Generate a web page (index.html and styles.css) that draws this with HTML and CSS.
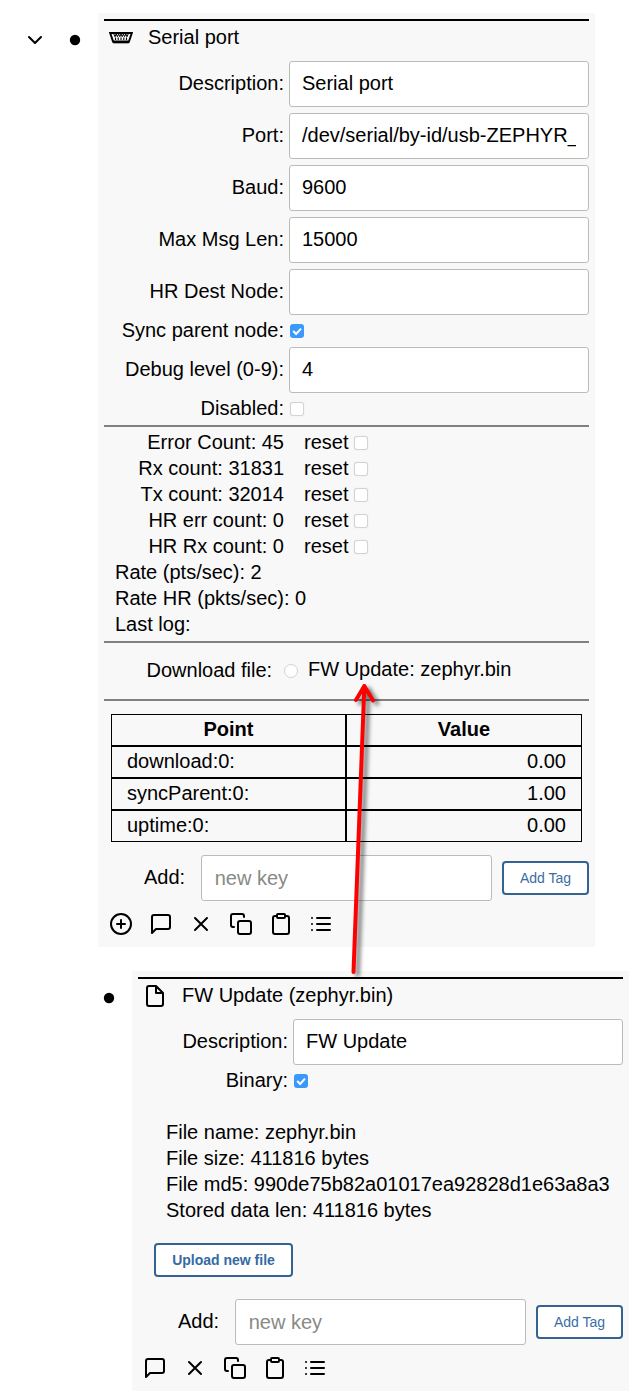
FILE: index.html
```html
<!DOCTYPE html>
<html lang="en">
<head>
<meta charset="utf-8">
<title>Nodes</title>
<link rel="stylesheet" href="styles.css">
</head>
<body>
<svg class="defs" width="0" height="0">
  <symbol id="message" viewBox="0 0 24 24"><path d="M21 15a2 2 0 0 1-2 2H7l-4 4V5a2 2 0 0 1 2-2h14a2 2 0 0 1 2 2z"/></symbol>
  <symbol id="x" viewBox="0 0 24 24"><path d="M18 6 6 18M6 6l12 12"/></symbol>
  <symbol id="copy" viewBox="0 0 24 24"><rect x="9" y="9" width="13" height="13" rx="2"/><path d="M5 15H4a2 2 0 0 1-2-2V4a2 2 0 0 1 2-2h9a2 2 0 0 1 2 2v1"/></symbol>
  <symbol id="clipboard" viewBox="0 0 24 24"><path d="M16 4h2a2 2 0 0 1 2 2v14a2 2 0 0 1-2 2H6a2 2 0 0 1-2-2V6a2 2 0 0 1 2-2h2"/><rect x="8" y="2" width="8" height="4" rx="1"/></symbol>
  <symbol id="list" viewBox="0 0 24 24"><path d="M8 6h13M8 12h13M8 18h13M3 6h.01M3 12h.01M3 18h.01"/></symbol>
  <symbol id="plus" viewBox="0 0 24 24"><circle cx="12" cy="12" r="10"/><path d="M12 8v8M8 12h8"/></symbol>
  <symbol id="file" viewBox="0 0 24 24"><path d="M13 2H6a2 2 0 0 0-2 2v16a2 2 0 0 0 2 2h12a2 2 0 0 0 2-2V9zM13 2v7h7"/></symbol>
  <symbol id="chevron" viewBox="0 0 24 24"><path d="m6 9 6 6 6-6"/></symbol>
  <symbol id="dot" viewBox="0 0 24 24"><circle cx="12" cy="12" r="5.2" fill="#000" stroke="none"/></symbol>
  <symbol id="serial" viewBox="0 0 24 24"><path d="M1.200 7h21.600l-2.800 8.500q-.3.700-1 .7H5q-.7 0-1-.7z" stroke-width="2"/><path d="M4 15.800h16" stroke-width="2.600"/><path d="m4.800 8 1.200 2.700L7.200 8l1.200 2.700L9.600 8l1.200 2.700L12 8l1.200 2.700L14.400 8l1.200 2.700L16.800 8l1.200 2.700L19.200 8" stroke-width="1"/><path d="M6.500 11.500v2.500M9.200 11.500v2.500M12 11.500v2.500M14.800 11.500v2.500M17.500 11.500v2.500" stroke-width="1.100"/></symbol>
</svg>
<main class="tree">
  <div class="node">
    <span class="icon marker"><svg><use href="#chevron"/></svg></span>
    <span class="icon marker"><svg><use href="#dot"/></svg></span>
    <section class="card">
      <header class="title"><span class="icon"><svg><use href="#serial"/></svg></span><span>Serial port</span></header>
      <label class="field"><span class="label">Description:</span><input class="input" value="Serial port"></label>
      <label class="field"><span class="label">Port:</span><input class="input" value="/dev/serial/by-id/usb-ZEPHYR_"></label>
      <label class="field"><span class="label">Baud:</span><input class="input" value="9600"></label>
      <label class="field"><span class="label">Max Msg Len:</span><input class="input" value="15000"></label>
      <label class="field"><span class="label">HR Dest Node:</span><input class="input" value=""></label>
      <div class="field"><span class="label">Sync parent node:</span><span class="check on"><svg viewBox="0 0 14 14"><path d="m3.200 7 2.900 3 4.900-5.400"/></svg></span></div>
      <label class="field"><span class="label">Debug level (0-9):</span><input class="input" value="4"></label>
      <div class="field"><span class="label">Disabled:</span><span class="check"></span></div>
      <div class="stats">
        <div class="counter"><span class="label">Error Count: 45</span><span class="reset"><span class="reset-text">reset</span><span class="check"></span></span></div>
        <div class="counter"><span class="label">Rx count: 31831</span><span class="reset"><span class="reset-text">reset</span><span class="check"></span></span></div>
        <div class="counter"><span class="label">Tx count: 32014</span><span class="reset"><span class="reset-text">reset</span><span class="check"></span></span></div>
        <div class="counter"><span class="label">HR err count: 0</span><span class="reset"><span class="reset-text">reset</span><span class="check"></span></span></div>
        <div class="counter"><span class="label">HR Rx count: 0</span><span class="reset"><span class="reset-text">reset</span><span class="check"></span></span></div>
        <div class="info">Rate (pts/sec): 2</div>
        <div class="info">Rate HR (pkts/sec): 0</div>
        <div class="info">Last log:</div>
      </div>
      <div class="download"><span class="download-label">Download file:</span><span class="radio"></span><span class="download-name">FW Update: zephyr.bin</span></div>
      <div class="points-wrap">
        <div class="points">
          <div class="cell head">Point</div><div class="cell head">Value</div>
          <div class="cell">download:0:</div><div class="cell value">0.00</div>
          <div class="cell">syncParent:0:</div><div class="cell value">1.00</div>
          <div class="cell">uptime:0:</div><div class="cell value">0.00</div>
        </div>
      </div>
      <div class="add"><span>Add:</span><input class="input" placeholder="new key"><button class="button">Add Tag</button></div>
      <div class="actions">
        <span class="icon"><svg><use href="#plus"/></svg></span>
        <span class="icon"><svg><use href="#message"/></svg></span>
        <span class="icon"><svg><use href="#x"/></svg></span>
        <span class="icon"><svg><use href="#copy"/></svg></span>
        <span class="icon"><svg><use href="#clipboard"/></svg></span>
        <span class="icon"><svg><use href="#list"/></svg></span>
      </div>
    </section>
  </div>
  <div class="node child">
    <span class="icon marker"><svg><use href="#dot"/></svg></span>
    <section class="card narrow">
      <header class="title"><span class="icon"><svg><use href="#file"/></svg></span><span>FW Update (zephyr.bin)</span></header>
      <label class="field"><span class="label">Description:</span><input class="input" value="FW Update"></label>
      <div class="field"><span class="label">Binary:</span><span class="check on"><svg viewBox="0 0 14 14"><path d="m3.200 7 2.900 3 4.900-5.400"/></svg></span></div>
      <div class="file-info">
        <div>File name: zephyr.bin</div>
        <div>File size: 411816 bytes</div>
        <div>File md5: 990de75b82a01017ea92828d1e63a8a3</div>
        <div>Stored data len: 411816 bytes</div>
      </div>
      <div class="upload"><button class="button strong">Upload new file</button></div>
      <div class="add"><span>Add:</span><input class="input" placeholder="new key"><button class="button">Add Tag</button></div>
      <div class="actions">
        <span class="icon"><svg><use href="#message"/></svg></span>
        <span class="icon"><svg><use href="#x"/></svg></span>
        <span class="icon"><svg><use href="#copy"/></svg></span>
        <span class="icon"><svg><use href="#clipboard"/></svg></span>
        <span class="icon"><svg><use href="#list"/></svg></span>
      </div>
    </section>
  </div>
</main>
<svg class="arrow" viewBox="0 0 60 320"><path d="M13.500 302 24.300 17M16 30l8.300-14L33 30.500"/></svg>
</body>
</html>
```

FILE: styles.css
```css
* { box-sizing: border-box; }
body {
  position: relative;
  margin: 0;
  background: #fff;
  color: #000;
  font: 20px/20px "Liberation Sans", Arial, sans-serif;
}
.defs { display: block; }
.tree {
  display: flex;
  flex-direction: column;
  gap: 24px;
  padding: 13px 0 8px 18px;
}
.node { display: flex; align-items: flex-start; gap: 6px; }
.child { padding-left: 74px; }
.icon { flex: none; width: 34px; height: 34px; padding: 5px; }
.icon svg {
  display: block;
  width: 24px;
  height: 24px;
  fill: none;
  stroke: #000;
  stroke-width: 2;
  stroke-linecap: round;
  stroke-linejoin: round;
}
.icon use[href="#serial"] { stroke-linecap: butt; stroke-linejoin: miter; }
.marker { margin-top: 10px; }
.card {
  --label: 180px;
  display: flex;
  flex-direction: column;
  gap: 6px;
  width: 497px;
  padding: 6px;
  background: #f8f8f8;
}
.narrow { --label: 150px; }
.title {
  display: flex;
  align-items: center;
  gap: 10px;
  height: 36px;
  border-top: 2px solid #000;
}
.title span:last-child { margin-top: -2px; }
.field { display: flex; align-items: center; gap: 5px; min-height: 20px; }
.label {
  flex: none;
  width: var(--label);
  margin-top: -2px;
  text-align: right;
  white-space: nowrap;
}
.input {
  flex: 1;
  min-width: 0;
  height: 46px;
  padding: 0 12px 2px;
  border: 1px solid #babdb6;
  border-radius: 3px;
  background: #fff;
  color: #000;
  font: inherit;
}
.input::placeholder { color: #888a85; opacity: 1; }
.check {
  flex: none;
  width: 14px;
  height: 14px;
  margin-left: 1px;
  border: 1px solid #d3d3d3;
  border-radius: 3px;
  background: #fff;
  box-shadow: 0 0 1px #d3d3d3;
}
.check.on { border: 0; background: #3b99fc; box-shadow: none; }
.check svg { display: block; fill: none; stroke: #fff; stroke-width: 2; }
.stats {
  display: flex;
  flex-direction: column;
  gap: 6px;
  padding-top: 6px;
  border-top: 2px solid #808080;
}
.counter { display: flex; align-items: center; gap: 20px; height: 20px; }
.reset { display: flex; align-items: center; gap: 4px; height: 20px; }
.reset-text { width: 45px; margin-top: -2px; }
.info { margin: -1px 0 1px; padding-left: 11px; }
.download {
  display: flex;
  align-items: center;
  height: 60px;
  padding-left: 42.500px;
  border: solid #808080;
  border-width: 2px 0;
}
.download-label { width: 125.500px; margin-top: -2px; white-space: nowrap; }
.radio {
  width: 14px;
  height: 14px;
  margin: 0 10px 0 12px;
  border: 1px solid #d3d3d3;
  border-radius: 50%;
  background: #fff;
}
.download-name { margin-top: -4px; }
.points-wrap { padding: 7px; }
.points {
  display: grid;
  grid-template-columns: 235px 236px;
}
.cell { height: 32px; padding: 4px 15px; border: 1px solid #000; }
.head { text-align: center; font-weight: bold; }
.value { text-align: right; }
.add { display: flex; align-items: center; padding-left: 40px; }
.add .input { margin: 0 10px 0 16px; padding: 0 12.500px; }
.add > span { margin-top: -2px; }
.button {
  height: 34px;
  width: 87px;
  padding: 0;
  border: 2px solid #346392;
  border-radius: 4px;
  background: #fff;
  color: #3a6ea5;
  font: 14px/14px "Liberation Sans", Arial, sans-serif;
}
.strong { width: 139px; font-weight: bold; color: #346ba2; }
.actions { display: flex; gap: 6px; }
.file-info {
  display: flex;
  flex-direction: column;
  gap: 6px;
  padding: 25px 0 1px 28px;
}
.upload { display: flex; padding: 16px; }
.arrow {
  position: absolute;
  left: 340px;
  top: 670px;
  width: 60px;
  height: 320px;
  fill: none;
  stroke: #f00;
  stroke-width: 4;
  stroke-linecap: round;
  stroke-linejoin: round;
  filter: drop-shadow(4px 3px 2px rgba(0, 0, 0, .55));
}
```
